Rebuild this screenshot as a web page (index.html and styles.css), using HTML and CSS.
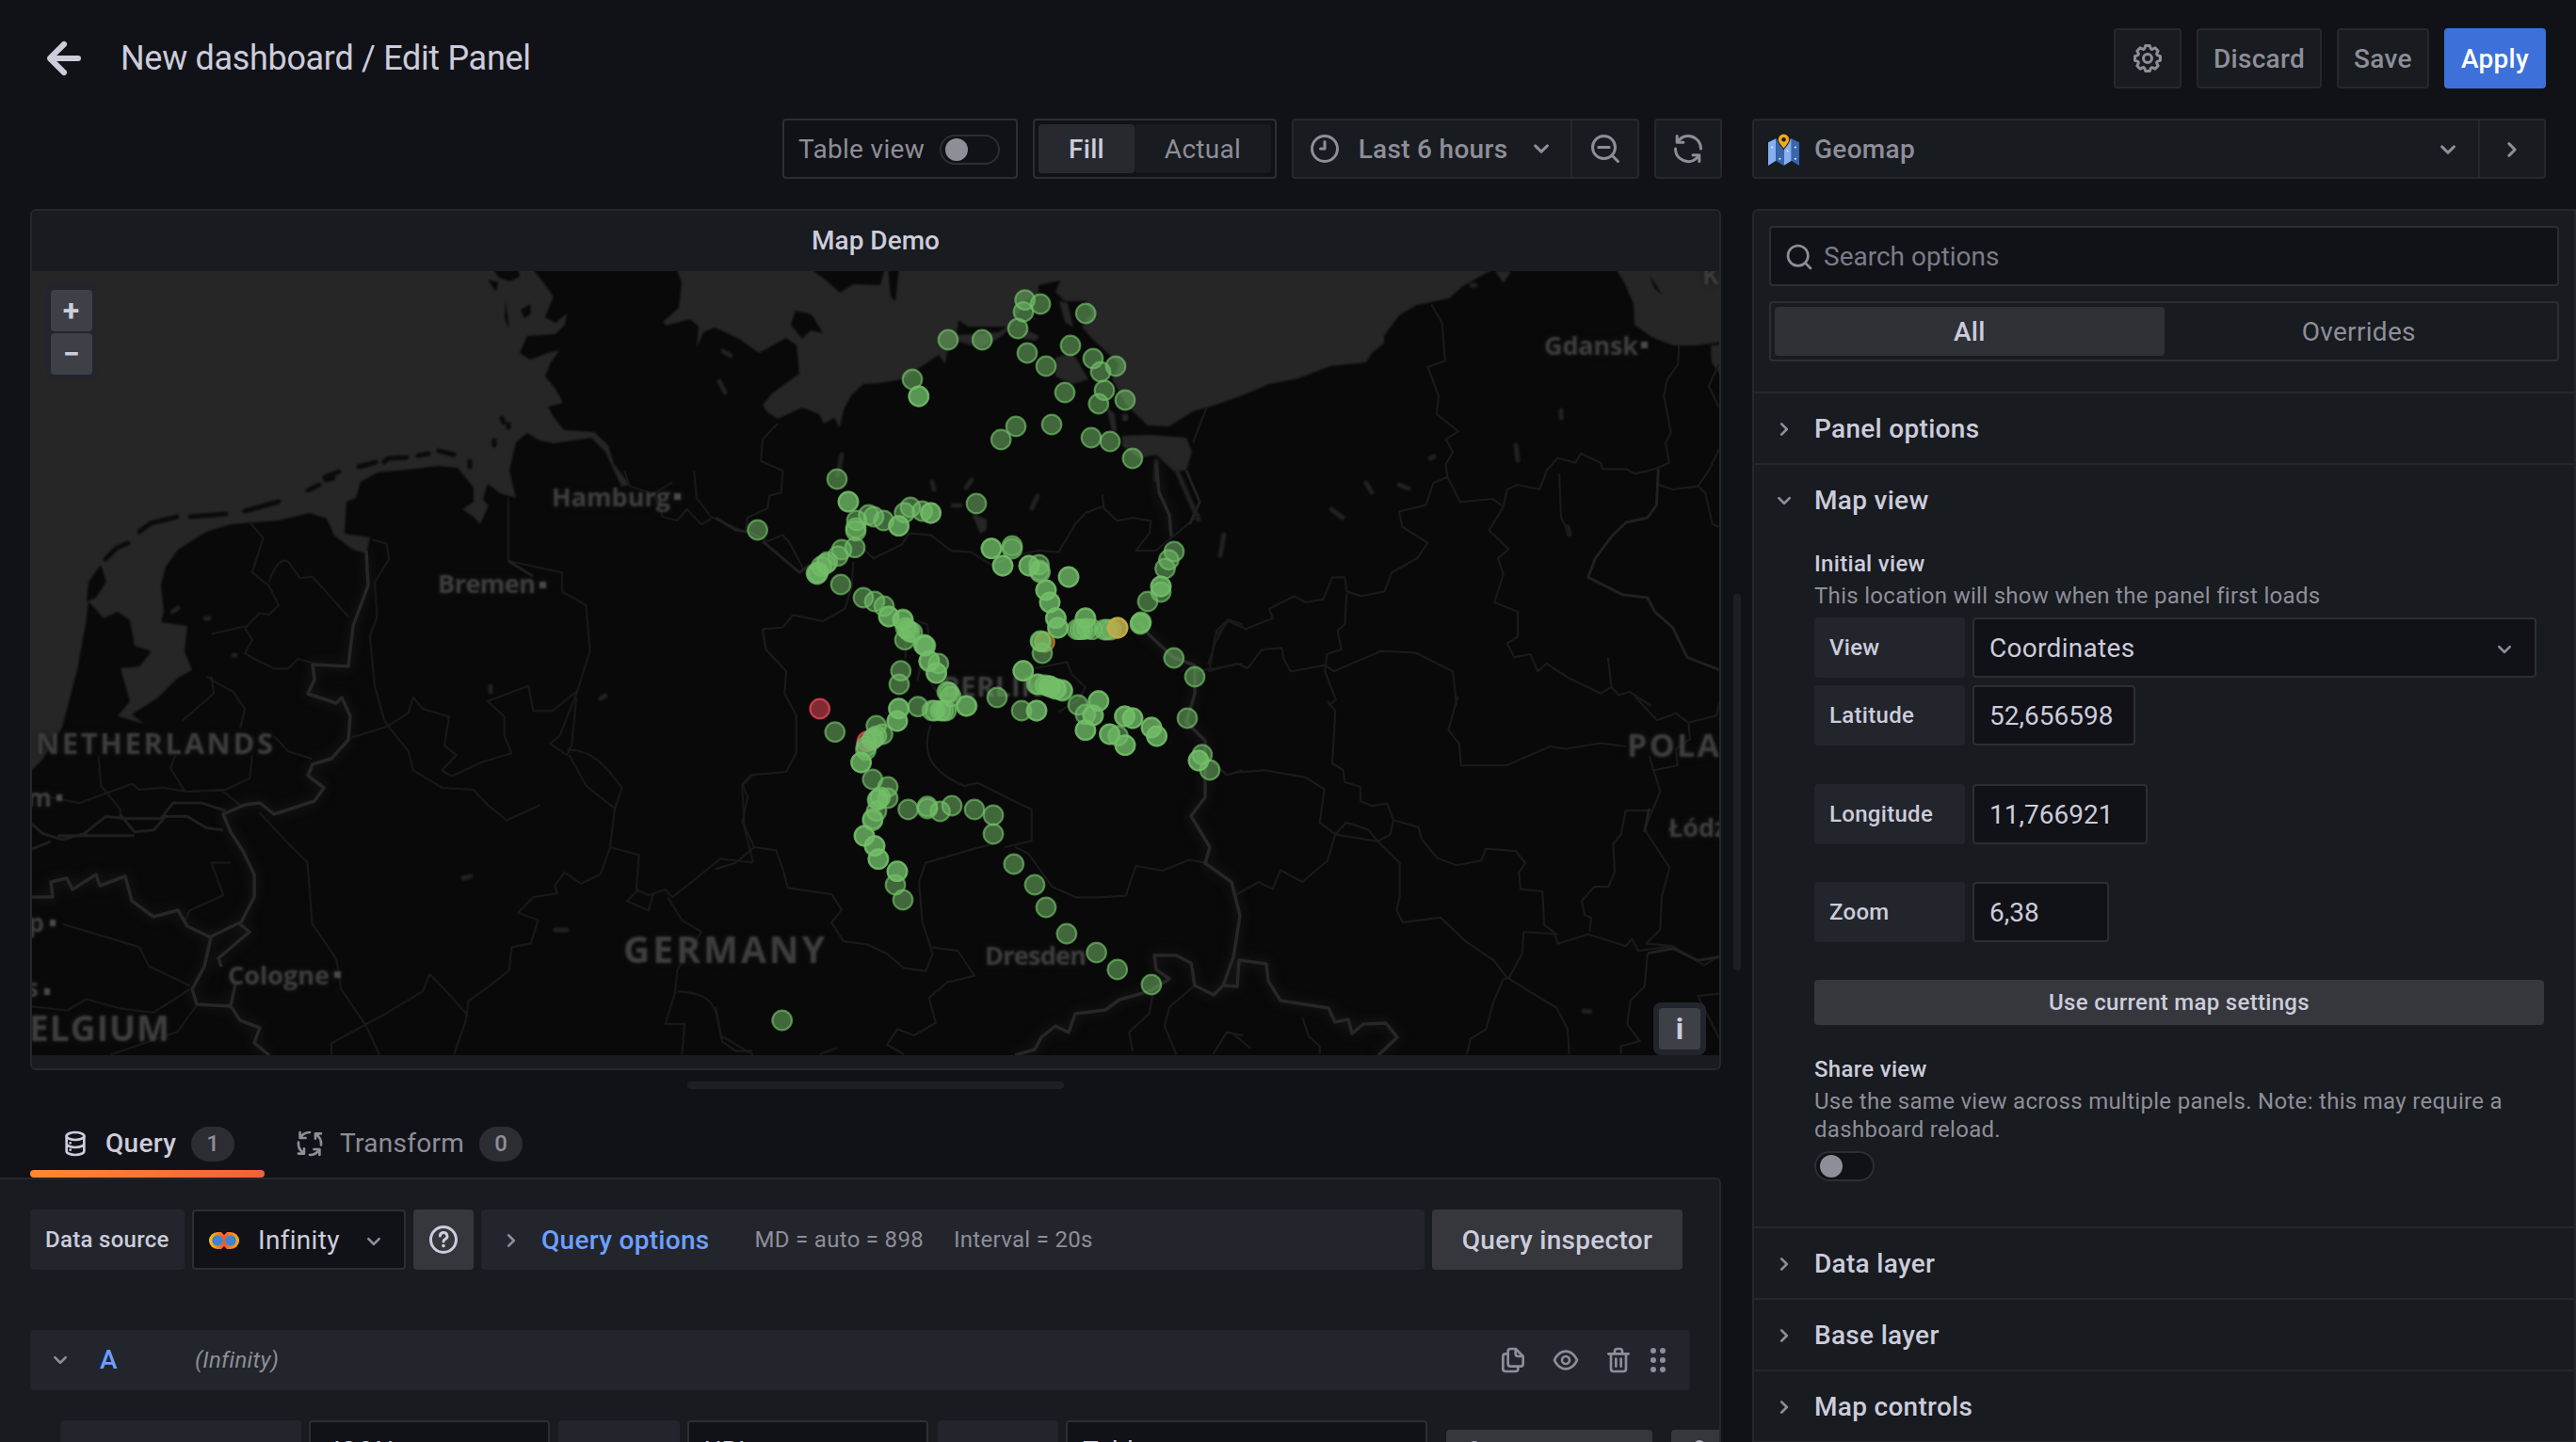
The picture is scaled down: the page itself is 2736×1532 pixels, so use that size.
FILE: index.html
```html
<!DOCTYPE html>
<html lang="en">
<head>
<meta charset="utf-8">
<title>New dashboard / Edit Panel</title>
<link rel="stylesheet" href="styles.css">
</head>
<body>
<svg class="defs" width="0" height="0">
  <symbol id="arrow-left" viewBox="0 0 24 24"><path d="M17,11H9.41l3.3-3.29a1,1,0,1,0-1.42-1.42l-5,5a1,1,0,0,0-.21.33,1,1,0,0,0,0,.76,1,1,0,0,0,.21.33l5,5a1,1,0,0,0,1.42,0,1,1,0,0,0,0-1.42L9.41,13H17a1,1,0,0,0,0-2Z"/></symbol>
  <symbol id="cog" viewBox="0 0 24 24"><path d="M21.32,9.55l-1.89-.63.89-1.78A1,1,0,0,0,20.13,6L18,3.87a1,1,0,0,0-1.15-.19l-1.78.89-.63-1.89A1,1,0,0,0,13.5,2h-3a1,1,0,0,0-.95.68L8.92,4.57,7.14,3.68A1,1,0,0,0,6,3.87L3.87,6a1,1,0,0,0-.19,1.15l.89,1.78-1.89.63A1,1,0,0,0,2,10.5v3a1,1,0,0,0,.68.95l1.89.63-.89,1.78A1,1,0,0,0,3.87,18L6,20.13a1,1,0,0,0,1.15.19l1.78-.89.63,1.89a1,1,0,0,0,.95.68h3a1,1,0,0,0,.95-.68l.63-1.89,1.78.89A1,1,0,0,0,18,20.13L20.13,18a1,1,0,0,0,.19-1.15l-.89-1.78,1.89-.63A1,1,0,0,0,22,13.5v-3A1,1,0,0,0,21.32,9.55ZM20,12.78l-1.2.4A2,2,0,0,0,17.64,16l.57,1.14-1.1,1.1L16,17.64a2,2,0,0,0-2.79,1.16l-.4,1.2H11.22l-.4-1.2A2,2,0,0,0,8,17.64l-1.14.57-1.1-1.1L6.36,16A2,2,0,0,0,5.2,13.18L4,12.78V11.22l1.2-.4A2,2,0,0,0,6.36,8L5.79,6.89l1.1-1.1L8,6.36A2,2,0,0,0,10.82,5.2l.4-1.2h1.56l.4,1.2A2,2,0,0,0,16,6.36l1.14-.57,1.1,1.1L17.64,8a2,2,0,0,0,1.16,2.79l1.2.4ZM12,8a4,4,0,1,0,4,4A4,4,0,0,0,12,8Zm0,6a2,2,0,1,1,2-2A2,2,0,0,1,12,14Z"/></symbol>
  <symbol id="angle-down" viewBox="0 0 24 24"><path d="M17,9.17a1,1,0,0,0-1.41,0L12,12.71,8.46,9.17a1,1,0,0,0-1.41,0,1,1,0,0,0,0,1.42l4.24,4.24a1,1,0,0,0,1.42,0L17,10.59A1,1,0,0,0,17,9.17Z"/></symbol>
  <symbol id="angle-right" viewBox="0 0 24 24"><path d="M14.83,11.29,10.59,7.05a1,1,0,0,0-1.42,0,1,1,0,0,0,0,1.41L12.71,12,9.17,15.54a1,1,0,0,0,0,1.41,1,1,0,0,0,.71.29,1,1,0,0,0,.71-.29l4.24-4.24A1,1,0,0,0,14.83,11.29Z"/></symbol>
  <symbol id="clock" viewBox="0 0 24 24"><g class="line"><circle cx="12" cy="12" r="9"/><path d="M12 7v5H9"/></g></symbol>
  <symbol id="search" viewBox="0 0 24 24"><g class="line"><circle cx="11" cy="11" r="8"/><path d="M17 17l4 4"/></g></symbol>
  <symbol id="search-minus" viewBox="0 0 24 24"><g class="line"><circle cx="11" cy="11" r="8"/><path d="M17 17l4 4M7.2 11h7.6"/></g></symbol>
  <symbol id="sync" viewBox="0 0 24 24"><path d="M19.91,15.51H15.38a1,1,0,0,0,0,2h2.4A8,8,0,0,1,4,12a1,1,0,0,0-2,0,10,10,0,0,0,16.88,7.23V21a1,1,0,0,0,2,0V16.5A1,1,0,0,0,19.91,15.51ZM12,2A10,10,0,0,0,5.12,4.77V3a1,1,0,0,0-2,0V7.5a1,1,0,0,0,1,1H8.62a1,1,0,0,0,0-2H6.22A8,8,0,0,1,20,12a1,1,0,0,0,2,0A10,10,0,0,0,12,2Z"/></symbol>
  <symbol id="database" viewBox="0 0 24 24"><g class="line"><ellipse cx="12" cy="6" rx="7" ry="3"/><path d="M5 6v12c0 1.7 3.1 3 7 3s7-1.300 7-3V6M5 12c0 1.700 3.100 3 7 3s7-1.300 7-3"/></g><circle cx="8" cy="11.500" r="1"/><circle cx="8" cy="17" r="1"/></symbol>
  <symbol id="process" viewBox="0 0 24 24"><g class="line"><path d="M4.200 3v4.500H8.700M4.600 7A9 9 0 0 1 12 3M21 4h-4.500v4M17 4.600A9 9 0 0 1 21 13M19.800 21v-4.500h-4.500M19.400 17A9 9 0 0 1 12 21M3 20h4.500v-4M7 19.400A9 9 0 0 1 3 11"/></g></symbol>
  <symbol id="question" viewBox="0 0 24 24"><g class="line"><circle cx="12" cy="12" r="9"/><path d="M9.600 9.400a2.500 2.500 0 1 1 3.600 2.300c-.8.4-1.200.8-1.200 1.600"/></g><circle cx="12" cy="16.400" r="1.200"/></symbol>
  <symbol id="copy" viewBox="0 0 24 24"><path d="M21,8.94a1.31,1.31,0,0,0-.06-.27l0-.09a1.070,1.070,0,0,0-.19-.28h0l-6-6h0a1.070,1.070,0,0,0-.28-.19.320.320,0,0,0-.09,0A.88.88,0,0,0,14.050,2H10A3,3,0,0,0,7,5V6H6A3,3,0,0,0,3,9V19a3,3,0,0,0,3,3h8a3,3,0,0,0,3-3V18h1a3,3,0,0,0,3-3V9S21,9,21,8.940ZM15,5.410,17.590,8H16a1,1,0,0,1-1-1ZM15,19a1,1,0,0,1-1,1H6a1,1,0,0,1-1-1V9A1,1,0,0,1,6,8H7v7a3,3,0,0,0,3,3h5Zm4-4a1,1,0,0,1-1,1H10a1,1,0,0,1-1-1V5a1,1,0,0,1,1-1h3V7a3,3,0,0,0,3,3h3Z"/></symbol>
  <symbol id="eye" viewBox="0 0 24 24"><path d="M21.920,11.600C19.900,6.910,16.100,4,12,4S4.100,6.910,2.080,11.600a1,1,0,0,0,0,.8C4.100,17.090,7.900,20,12,20s7.900-2.910,9.920-7.600A1,1,0,0,0,21.920,11.600ZM12,18c-3.170,0-6.170-2.290-7.900-6C5.830,8.290,8.830,6,12,6s6.170,2.290,7.900,6C18.170,15.710,15.170,18,12,18ZM12,8a4,4,0,1,0,4,4A4,4,0,0,0,12,8Zm0,6a2,2,0,1,1,2-2A2,2,0,0,1,12,14Z"/></symbol>
  <symbol id="trash" viewBox="0 0 24 24"><path d="M10,18a1,1,0,0,0,1-1V11a1,1,0,0,0-2,0v6A1,1,0,0,0,10,18ZM20,6H16V5a3,3,0,0,0-3-3H11A3,3,0,0,0,8,5V6H4A1,1,0,0,0,4,8H5V19a3,3,0,0,0,3,3h8a3,3,0,0,0,3-3V8h1a1,1,0,0,0,0-2ZM10,5a1,1,0,0,1,1-1h2a1,1,0,0,1,1,1V6H10Zm7,14a1,1,0,0,1-1,1H8a1,1,0,0,1-1-1V8H17Zm-3-1a1,1,0,0,0,1-1V11a1,1,0,0,0-2,0v6A1,1,0,0,0,14,18Z"/></symbol>
  <symbol id="grip" viewBox="0 0 20 28"><circle cx="5" cy="4" r="3"/><circle cx="15" cy="4" r="3"/><circle cx="5" cy="14" r="3"/><circle cx="15" cy="14" r="3"/><circle cx="5" cy="24" r="3"/><circle cx="15" cy="24" r="3"/></symbol>
</svg>

<header class="topbar">
  <svg class="icon back"><use href="#arrow-left"/></svg>
  <h1 class="page-title">New dashboard / Edit Panel</h1>
  <div class="actions">
    <button class="btn gear"><svg class="icon s36"><use href="#cog"/></svg></button>
    <button class="btn discard">Discard</button>
    <button class="btn save">Save</button>
    <button class="btn apply">Apply</button>
  </div>
</header>

<div class="toolbar">
  <div class="toolbar-left">
    <label class="table-view">Table view <span class="switch"></span></label>
    <div class="radio size-mode"><span class="radio-item active">Fill</span><span class="radio-item">Actual</span></div>
    <div class="btn-group">
      <button class="btn time"><svg class="icon s36"><use href="#clock"/></svg><span class="time-text">Last 6 hours</span><svg class="icon s36"><use href="#angle-down"/></svg></button>
      <button class="btn zoom-out"><svg class="icon s36"><use href="#search-minus"/></svg></button>
    </div>
    <button class="btn refresh"><svg class="icon s36"><use href="#sync"/></svg></button>
  </div>
  <div class="picker">
    <button class="btn picker-main">
      <svg class="map-logo" viewBox="0 0 32 33"><path fill="#84aff1" d="M0 9l8-4v23l-8 5zM16 9l8-4v23l-8 5z"/><path fill="#3865ab" d="M8 5l8 4v24l-8-5zM24 5l8 4v24l-8-5z"/><g fill="#e8f0ff"><circle cx="4" cy="14" r="1"/><circle cx="12" cy="26" r="1"/><circle cx="20" cy="18" r="1"/><circle cx="28" cy="14" r="1"/><circle cx="28" cy="26" r="1"/></g><path fill="#f2a81d" stroke="#181b1f" stroke-width="1" d="M16 16c-2-3-6-6-6-10a6 6 0 0 1 12 0c0 4-4 7-6 10z"/><circle cx="16" cy="6" r="2.200" fill="#181b1f"/></svg>
      <span>Geomap</span><svg class="icon s36 push"><use href="#angle-down"/></svg>
    </button>
    <button class="btn picker-toggle"><svg class="icon s36"><use href="#angle-right"/></svg></button>
  </div>
</div>

<main class="editor">
  <section class="left">
    <div class="panel">
      <h2 class="panel-title">Map Demo</h2>
      <div class="map">
        <svg class="map-canvas" viewBox="34 288 1792 833" preserveAspectRatio="none">
          <defs>
            <marker id="g" markerUnits="userSpaceOnUse" markerWidth="26" markerHeight="26" refX="13" refY="13"><circle cx="13" cy="13" r="10.300" class="dot green"/></marker>
          </defs>
          <rect class="land" x="34" y="288" width="1792" height="833"/>
          <g class="terrain">
            <!-- seas -->
            <path class="water" d="M30 284H564L574 296 588 315 579 337 590 343 602 333 600 345 590 355 560 357 552 375 563 382 582 375 594 372 585 385 579 400 590 413 598 428 582 432 588 443 599 457 631 459 646 473 652 493 669 515 660 517 643 480 628 465 588 471 573 468 560 460 548 470 541 500 548 529 531 524 518 514 513 531 519 537 510 557 503 549 491 541 503 533 503 518 486 497 465 495 442 498 401 502 383 512 378 529 368 533 366 567 393 571 389 588 375 584 355 569 347 551 329 545 296 553 245 557 219 565 189 584 176 602 171 622 174 651 171 661 199 665 196 692 204 712 189 720 168 741 140 759 153 769 125 761 138 745 128 710 148 708 161 692 143 686 138 659 125 650 110 657 94 639 91 663 82 712 66 773 46 806 30 822Z"/>
            <path class="water" d="M718 284L724 300 721 327 704 342 707 346 733 339 742 347 740 370 747 353 759 348 785 360 806 375 835 359 846 367 849 397 820 418 810 430 814 437 826 445 852 433 870 440 875 450 886 444 892 455 896 435 904 420 917 408 935 407 958 403 978 390 997 377 1004 387 1006 373 1019 363 1042 370 1064 357 1071 350 1081 333 1089 320 1103 313 1103 303 1126 298 1121 310 1131 320 1153 320 1160 333 1149 347 1160 360 1171 370 1189 387 1181 403 1196 430 1219 452 1242 453 1267 437 1292 430 1320 420 1348 408 1379 402 1413 389 1451 385 1457 375 1470 365 1470 357 1486 335 1505 324 1539 317 1555 303 1590 284Z"/>
            <path class="water" d="M1715 284L1725 300 1735 323 1736 345 1754 358 1777 367 1803 367 1830 363V284ZM1817 367L1830 366V402L1818 385ZM1192 463L1221 462 1260 465 1266 480 1260 500 1246 500 1228 483 1210 487 1192 474ZM1121 380L1139 374 1156 403 1139 408 1121 400ZM1125 320L1134 322 1140 348 1131 342ZM1032 545L1048 552 1048 563 1041 567ZM1175 432L1184 440 1186 458 1181 458ZM1192 440H1198V447H1192ZM1588 288H1605L1597 301ZM1089 350L1104 357 1100 362 1086 360Z"/>
            <!-- islands -->
            <path class="isle" d="M522 284H550L552 294 542 299 530 295ZM518 297L527 310 529 300ZM553 329L563 323 564 333 557 338ZM537 320L541 350 536 338ZM845 330L862 334 874 354 861 351 852 360 840 345ZM858 284L878 298 892 311 906 302 935 303 940 284ZM943 284L955 284 951 320 946 315ZM107 600L113 618 102 635 92 639 94 618ZM1018 340L1028 347 1070 347 1060 353 1016 356ZM1752 292L1766 314 1757 306Z"/>
            <path class="isle-line" d="M112 594L124 582 136 577M148 565L160 556 188 549M202 549L240 546M260 543L296 533M327 521L339 515M346 510l8-2M345 507L360 501M381 496L399 491M408 491L412 487 432 486M444 484L455 482M466 479L482 483M499 490v6M525 468v5M533 444l2 5M540 451v3"/>
            <!-- lakes -->
            <path class="lake" d="M768 373l8 5M764 405l6 12M894 483l-4 22M1032 510l-6 8M1102 527l-6 13M1451 513l6 10M1486 515l10 4M1519 487l4-2M1414 541l12 9M1300 568l-4 22M1610 473l2 16M1658 436v8M1665 560l2 8M990 512l2 8M1012 537h8M638 742l5-3M521 729v6M492 933l8-2M590 988l12 0M218 657l4 0M183 650l6-4M248 696h2M1250 500l14 32 9 20M1563 303h4M1228 490v20M1682 1074l7 1"/>
          </g>
          <g class="states">
            <g transform="translate(0 500) scale(.5102 .4082)">
              <path d="M520 135L548 175 525 265 560 300 580 350 560 375 540 370 510 410 525 440 510 475 530 490 570 515 600 515 620 490 650 500M560 290C570 250 590 215 605 245L625 280 650 275 725 380M440 425L475 415 510 405M430 535L455 555 485 575 510 620 500 670M440 535L445 580 380 650M775 180L805 190 810 230 780 290 785 380 770 430 780 560 800 650 808 665 730 695M808 665L850 630 860 590 880 620 935 640 925 715 950 740 920 780 940 795 1000 760 1065 735 1050 690 1050 640 1015 600 1100 560 1110 625 1150 625 1200 575M808 665L850 730 860 780 920 825 985 830 1015 870 1055 910 1125 870M1058 70V235L1170 265V315L1220 350 1228 470 1200 580 1165 690 1145 710 1180 740 1190 715 1200 590M1180 725C1240 730 1260 770 1295 825L1280 880 1220 820 1185 740M1280 880L1270 980 1330 1000 1325 1090 1350 1105 1385 1090 1400 1110 1500 1010 1568 1020M1270 980L1250 1050 1210 1075 1175 1045 1155 1080 1160 1100 1110 1110 1078 1150 1120 1170 1105 1230 1065 1240 1060 1300 1020 1340 975 1380 970 1430 945 1520M975 1420L940 1370 895 1310 880 1355 800 1415 690 1490 690 1520M1330 1090L1305 1120 1350 1145 1360 1100M1390 1110L1420 1170 1460 1200 1410 1300 1405 1360 1385 1440 1425 1440 1420 1520M1410 1355C1490 1360 1490 1400 1500 1470L1568 1520M1300 0L1310 40 1360 60 1400 30M1445 0L1450 70 1480 120 1550 160M1360 60L1380 120 1410 130 1430 100 1460 140 1480 125M205 740L210 820 250 880 250 900M365 740L355 775 385 835M525 740L520 800 470 830 390 835 340 825 290 830 275 815 220 840 165 865 66 840M570 690L600 730 650 750M460 830L500 870M540 890L600 970 640 1020 650 1180 700 1270 710 1350 760 1440 790 1520M480 1020H440L465 1105 395 1145 385 1170M66 1395L140 1405 180 1375 250 1400 320 1410 395 1350M395 1340L310 1290 290 1240 130 1180M410 1390L370 1460 230 1520M1568 790L1545 820 1550 930 1568 1020"/>
              <path class="river" d="M66 920L90 945 130 960 175 945 220 900 260 905 335 905 360 865 420 865 470 885M250 895L280 940 320 935 345 900 390 900 430 930 465 935M120 950H280M66 985L105 965M1058 235L1110 275"/>
            </g>
            <g transform="translate(760 270) scale(.35714 .33333)">
              <path d="M185 540L140 590 135 660 200 690 195 760 160 770 155 810 95 840 90 880 155 915 200 895 220 920 265 1010M410 980L405 1060 385 1130 320 1170 230 1150 200 1190 140 1195 150 1260 180 1295M430 930L470 970 555 925 575 890 640 895 700 945 760 950 820 990 880 965 960 945 1020 950 1070 860 1100 825 1150 805 1195 850 1240 840 1295 850 1290 890 1250 945 1310 945 1360 900 1440 830M1150 765L1155 810M1460 490L1420 600M565 1240V1290M600 1170L630 1180 635 1230M1475 1290L1490 1200 1525 1165 1568 1180"/>
              <path class="river" d="M0 840L60 880 95 885M140 915L250 1015 280 990M1400 690L1440 790 1410 860"/>
            </g>
            <g transform="translate(760 640) scale(.35714 .33333)">
              <path d="M140 90L150 150 210 220 205 290 240 360 240 480 210 540 105 550 80 580 95 620 80 700 115 780 180 790 200 850 215 910 345 930 375 980 345 1020 380 1080 450 1090 510 1120 560 1165 625 1175 645 1120 640 1100 615 1020 605 890 625 830 770 785 825 770M115 780L60 830 0 850M645 1100L720 1110 770 1190 690 1210 635 1260 655 1340 590 1380 540 1360 510 1410 560 1440M640 390C610 480 640 540 740 585L780 575 900 640 940 660 940 760 860 780M890 780L930 800 1000 905 1070 940 1140 940 1220 935 1250 840 1330 855 1410 820 1455 830M600 250L610 200 660 290M950 210L1045 190 1060 230 1100 270 1080 310 1020 350M1470 210L1485 110 1525 60 1568 80M1430 220L1568 195M1470 500L1520 550 1568 535M1300 1250L1290 1310 1230 1370 1240 1430M1425 1220L1350 1290 1335 1350 1370 1440M1568 1380L1520 1370 1480 1440M0 1290L20 1400 60 1430 110 1430M310 1440L360 1420"/>
            </g>
            <g transform="translate(1260 270) scale(.3827 .33333)">
              <path d="M680 160L710 220 718 340 670 360 700 450 695 510 755 565 720 590 740 630 720 670 725 710 760 790 850 780 880 805 890 750 920 735 980 750 1000 690 1030 650 1080 665 1095 635 1150 665 1155 685 1220 685 1245 700 1300 685 1340 665 1330 600 1345 570 1325 450 1335 400 1365 350 1367 290M725 710L685 730 665 800 590 820 600 870 670 920 640 970 570 1015 550 1075 485 1090 445 1075 440 1030 405 1030 380 1100 330 1110 300 1090 230 1130 240 1160 165 1195 115 1165 80 1240 60 1310M60 1330L140 1305 170 1320 210 1260 265 1255 270 1290 290 1330 385 1310 410 1330 540 1265 635 1270 740 1330 750 1440M445 1080L440 1180 420 1200 430 1260 390 1275 385 1330 415 1420 395 1440M880 805L840 880 895 940 865 970 880 1020 855 1110 920 1140 920 1220 890 1240 910 1285 955 1275 975 1330 1000 1305 1060 1350 1150 1400 1180 1380 1170 1285M1180 1380L1200 1405 1230 1395 1290 1440M1310 735L1350 750 1420 740 1440 760 1460 860 1479 870M1420 740L1450 690 1479 620M1479 350L1450 420 1479 490M1035 700L1040 840 1065 895"/>
              <path class="river" d="M1310 685L1305 800 1280 840 1220 855 1180 900 1135 970 1115 1030 1210 1085 1280 1095 1300 1140 1350 1190 1390 1285 1479 1325"/>
            </g>
            <g transform="translate(1310 740) scale(.33333 .50505)">
              <path d="M300 10L325 30 315 140 350 155 355 180 405 190 405 220 440 230 490 225 510 260 590 275 600 300 650 340 710 355 790 345 805 320 900 325 930 350 910 370 915 405 985 410 990 480 1020 495 1035 520 1130 500 1250 525 1270 510 1290 535 1400 525 1500 565 1549 545M0 160L100 155 230 170 290 195 275 265 325 290 460 305 530 350 530 420 520 450 540 475 660 465 740 515 830 555 870 590 930 615 1030 655 1065 700 1070 752M0 420L80 390 125 405 150 365 220 390 300 345 325 290 360 265 430 280 460 305 500 290 510 260M715 0L685 70 720 100 725 145 870 145 1010 105 1060 110 1170 98 1250 105M1280 0L1350 50 1410 35 1450 55 1540 40 1549 10M1450 55L1455 90 1410 110 1415 145 1340 155M1325 125L1360 200 1310 280 1390 360 1365 420 1360 490 1315 520 1400 525M1330 240L1250 240 1235 290 1210 310 1215 370 1195 400 1150 400 1110 430 1120 460 1140 465 1135 495M1035 500L925 495 920 540 880 590 860 595 830 640 805 700 755 720 745 752M1320 540L1310 610 1265 640 1255 690 1295 725 1235 735V752M0 710L55 740M220 675L240 715 275 735V752M1549 625L1480 630 1549 720"/>
              <path class="river" d="M1325 235L1310 285M1320 540L1400 530 1480 555 1549 548"/>
            </g>
          </g>
          <g class="borders">
            <path d="M389 585L391 622 375 665 370 708 332 706 334 722 327 737 357 747 363 741 372 761 370 786 352 806 332 812 327 824 344 837 334 851 291 865 276 853 260 855 237 865 245 884 258 904 270 929 270 953 255 982 265 990 232 1018 235 1027M34 953L56 953 54 937 71 933 77 945 102 929 106 941 133 931 140 957 163 974 189 967 199 984 224 996 217 1027 204 1051 209 1067 245 1069 255 1084 276 1092 270 1108 286 1121M245 1069L250 1045M222 996L255 980"/>
            <path d="M1228 493L1231 523 1242 547 1244 570M1211 662L1221 675 1246 698 1269 707V737L1260 767 1280 787V847L1265 867 1285 900 1280 917 1308 937 1317 973 1310 1017 1299 1047 1289 1057 1269 1047 1265 1023 1249 1015 1226 1015 1228 1030 1242 1040 1221 1053 1189 1062 1174 1073 1142 1077 1135 1097 1121 1090 1106 1102 1099 1115 1078 1121M1299 1047L1314 1048 1316 1020 1345 1024 1347 1042 1360 1063 1411 1071 1418 1086 1432 1083 1436 1098 1448 1088 1472 1087 1484 1102 1464 1121"/>
          </g>
          <g class="labels">
            <g font-size="27">
              <text x="586" y="538" textLength="126">Hamburg</text><text x="465" y="630" textLength="104">Bremen</text><text x="242" y="1046" textLength="108">Cologne</text><text x="1046" y="1025" textLength="108">Dresden</text><text x="1640" y="377" textLength="100">Gdansk</text><text x="1808" y="302">K</text><text x="1772" y="889">Łódź</text><text x="55" y="857" text-anchor="end">m</text><text x="47" y="990" text-anchor="end">p</text><text x="41" y="1059" text-anchor="end">s</text>
            </g>
            <text x="38" y="801" font-size="31" textLength="252">NETHERLANDS</text>
            <text x="662" y="1023" font-size="39" textLength="214">GERMANY</text>
            <text x="1000" y="740" font-size="29" textLength="108">BERLIN</text>
            <text x="31" y="1106" font-size="37" textLength="149">ELGIUM</text>
            <text x="1728" y="804" font-size="34" textLength="98">POLA</text>
            <path class="town" d="M716 524h7v7h-7zM573 618h7v7h-7zM355 1032h7v7h-7zM1743 363h7v7h-7zM60 844h6v7h-6zM53 977h6v7h-6zM47 1050h6v7h-6z"/>
          </g>
          <g class="dot red"><circle cx="870.700" cy="753" r="10.300"/><circle cx="921" cy="787.700" r="10.300"/></g>
          <circle class="dot orange" cx="1109.500" cy="682" r="10.300"/>
          <polyline class="pts" points="1088.6,318.7 1105,323 1087,331.3 1153.2,333 1081,349 1007,361 1043.2,361 1091,375 1137,367 1111,389 1161,381 1185,389 1169,395 1173,414.7 1166.8,429 1195,425 1131,417 969,403 975.8,421 975.8,421 1079,453 1063.2,467 1117,451 1159,465 1179,469 1202.9,487 889,509 901,533 901,533 804.6,563 1037,535 910,553 909,561 909,564 922.5,547 928,549 938.6,553 954.6,558.7 954.6,558.7 960.7,544.7 967,539 979.6,543 988.6,545 988.6,545 908,581.7 894,584 890,590.7 879,597 877,599 872.5,601.7 869,608 867,609 868,610 893,621"/>
          <polyline class="pts" points="917,635 929,639 939,644 944,655 944,655 959,658 959,659 962,667 964,669 966,671 969,672 961,679.7 981,685 983,686 982,686 986.8,702.7 987,702 996.8,705 994.6,715 994.6,715 956.8,712.7 955,727 1006,735 1008,736 1010,740 1026,750 1027,750 954.6,752.7 954.6,753 953,766 953,766 975,750.7 990,755 993,755 999,755 1002,755 1005,755 886.8,777.7 930.7,771 937.5,780 928,784 926,786 931,782 919.6,796.7 920,793 914.6,810 914.6,810 926.8,828 943,836 943,848 933,849 932,850 935,847 931,861.7 926.8,871.7 927,870 918,888 918,888 929,898.7 929,898.7 932.9,912.7 932.9,912.7 953,925.7 953,925.7 951,940 959,956 964.6,860 985,856.7 985,859 998.6,862 1011,856 1035,860 1055,866 1055,886 1076.8,918 1099,940 1111,964 1132.9,992 1164.6,1012 1186.8,1030 1222.9,1046 830.7,1084"/>
          <polyline class="pts" points="1053,582.7 1053,582.7 1075,580 1075,583 1065,601 1065,601 1093,601 1093,601 1103.6,600 1104.6,608 1104,606 1135,613 1135,613 1111,627 1111,627 1115,640 1115,640 1121.4,656.7 1121.4,656.7 1123.6,667 1123.6,667 1152.9,656.7 1152.9,657 1144,668.7 1147,668.7 1150,668.7 1154.6,668 1160,668.7 1173,669 1176,669 1180,669 1187,667 1187,667 1211.4,662 1212,661 1211,663 1219,639 1233,629 1233,623 1233,623 1237.5,604 1241.4,594.7 1247,586 1105.7,681.7 1105,681 1107,694 1246.8,699 1086.8,712.7 1086.8,712.7 1101,727 1103,727 1110,728 1115,729 1114,729 1116,730 1120.7,731.7 1122,732 1128.6,734 1128,733 1059,741 1085,755 1101,755 1101,755 1145,749 1166.8,744.7 1166.8,744.7 1152.9,759 1161,760 1161,760 1152.9,775.7 1152.9,775.7 1178.6,780 1178.6,780 1187.5,781.7 1195,791.7 1195,791.7 1194.6,761 1194.6,761 1203,763 1203,763 1223,773 1223,773 1228.6,782 1228.6,782 1269,719 1261,763 1276.8,801.7 1273,808 1273,808 1285,818"/>
          <circle class="dot orange" cx="1187" cy="667" r="10.300"/>
        </svg>
        <div class="zoom-control"><button>+</button><button>−</button></div>
        <div class="info-control"><button>i</button></div>
      </div>
    </div>
    <div class="h-handle"></div>
    <nav class="tabs">
      <a class="tab active"><svg class="icon s32"><use href="#database"/></svg>Query<span class="badge">1</span></a>
      <a class="tab"><svg class="icon s32"><use href="#process"/></svg>Transform<span class="badge">0</span></a>
    </nav>
    <div class="query-pane">
      <div class="row source-row">
        <span class="field-label">Data source</span>
        <div class="select source-select">
          <svg class="infinity" viewBox="0 0 32 18"><defs><linearGradient id="ig" x1="0" x2="1"><stop offset="0" stop-color="#fbca0a"/><stop offset=".5" stop-color="#f4552e"/><stop offset="1" stop-color="#fbb40a"/></linearGradient></defs><rect width="32" height="18" rx="9" fill="url(#ig)"/><path fill="#111217" d="M13 0h6l-3 3zM13 18h6l-3-3z"/><circle cx="9" cy="9" r="5.800" fill="#3d83d6"/><circle cx="23" cy="9" r="5.800" fill="#3d83d6"/></svg>
          <span>Infinity</span><svg class="icon s32 push"><use href="#angle-down"/></svg>
        </div>
        <button class="solid help"><svg class="icon s36"><use href="#question"/></svg></button>
        <div class="query-options"><svg class="icon s32"><use href="#angle-right"/></svg><span class="link">Query options</span><span class="meta">MD = auto = 898</span><span class="meta">Interval = 20s</span></div>
        <button class="solid inspector">Query inspector</button>
      </div>
      <div class="query-row">
        <svg class="icon s32"><use href="#angle-down"/></svg><span class="ref">A</span><em class="ds">(Infinity)</em>
        <div class="row-actions"><svg class="icon s32"><use href="#copy"/></svg><svg class="icon s32"><use href="#eye"/></svg><svg class="icon s32"><use href="#trash"/></svg><svg class="icon grip"><use href="#grip"/></svg></div>
      </div>
      <div class="row fields-row">
        <span class="field-label w256"></span><div class="select w256">JSON</div>
        <span class="field-label w129"></span><div class="select w256">URL</div>
        <span class="field-label w128"></span><div class="select w384">Table</div>
        <button class="solid add"><span class="round"></span></button><button class="solid more"><span class="round"></span></button>
      </div>
    </div>
  </section>
  <div class="gutter"><div class="v-handle"></div></div>
  <aside class="options">
    <div class="options-head">
      <div class="search"><svg class="icon s32"><use href="#search"/></svg>Search options</div>
      <div class="radio filter"><span class="radio-item active">All</span><span class="radio-item">Overrides</span></div>
    </div>
    <div class="section"><h3><svg class="icon s32"><use href="#angle-right"/></svg>Panel options</h3></div>
    <div class="section">
      <h3><svg class="icon s32"><use href="#angle-down"/></svg>Map view</h3>
      <div class="section-body">
        <h4>Initial view</h4>
        <p>This location will show when the panel first loads</p>
        <div class="row pair"><span class="field-label">View</span><div class="select view">Coordinates<svg class="icon s32 push"><use href="#angle-down"/></svg></div></div>
        <div class="row pair lat"><span class="field-label">Latitude</span><div class="select number w173">52,656598</div></div>
        <div class="row pair lon"><span class="field-label">Longitude</span><div class="select number w186">11,766921</div></div>
        <div class="row pair zoom"><span class="field-label">Zoom</span><div class="select number w145">6,38</div></div>
        <button class="solid use-current">Use current map settings</button>
        <h4>Share view</h4>
        <p>Use the same view across multiple panels. Note: this may require a dashboard reload.</p>
        <span class="switch"></span>
      </div>
    </div>
    <div class="section"><h3><svg class="icon s32"><use href="#angle-right"/></svg>Data layer</h3></div>
    <div class="section"><h3><svg class="icon s32"><use href="#angle-right"/></svg>Base layer</h3></div>
    <div class="section"><h3><svg class="icon s32"><use href="#angle-right"/></svg>Map controls</h3></div>
    <div class="section"></div>
  </aside>
</main>
</body>
</html>
```
FILE: styles.css
```css
:root {
  --canvas: #111217;
  --primary: #181b1f;
  --secondary: #22252b;
  --text: #ccccdc;
  --muted: #8e8e99;
  --weak: #25272c;
  --medium: #2d2e34;
  --solid: #35373c;
  --link: #6e9fff;
}
* { box-sizing: border-box; }
body {
  margin: 0;
  width: 2736px;
  height: 1532px;
  overflow: hidden;
  display: flex;
  flex-direction: column;
  background: var(--canvas);
  color: var(--text);
  font: 400 28px/1.5 Roboto, "Liberation Sans", sans-serif;
  letter-spacing: 0.3px;
}
h1, h2, h3, h4, p { margin: 0; font-weight: 500; }
button { font: inherit; letter-spacing: inherit; color: inherit; border: 0; padding: 0; margin: 0; }
.defs { display: block; height: 0; }
.icon { fill: currentColor; flex: none; display: block; }
.line { fill: none; stroke: currentColor; stroke-width: 2; stroke-linecap: round; stroke-linejoin: round; }
.s32 { width: 32px; height: 32px; }
.s36 { width: 36px; height: 36px; }
.push { margin-left: auto; }

/* top bar */
.topbar { height: 124px; flex: none; display: flex; align-items: center; padding: 0 32px; }
.back { width: 72px; height: 72px; }
.page-title { margin-left: 24px; font-size: 36px; font-weight: 400; line-height: 44px; letter-spacing: -0.32px; }
.actions { margin-left: auto; display: flex; gap: 16px; }
.btn {
  height: 64px;
  display: flex;
  align-items: center;
  justify-content: center;
  background: var(--primary);
  border: 2px solid var(--weak);
  border-radius: 4px;
  color: var(--muted);
  font-weight: 500;
}
.gear { width: 72px; }
.discard { width: 133px; padding-top: 1px; }
.save { width: 98px; padding-top: 1px; }
.apply { width: 108px; padding-top: 1px; background: #3d71d9; border-color: #3d71d9; color: #fff; }

/* toolbar */
.toolbar { display: flex; height: 64px; flex: none; margin: 2px 32px 32px 0; }
.toolbar-left { width: 1829px; display: flex; justify-content: flex-end; gap: 16px; }
.table-view {
  width: 250px;
  border: 2px solid var(--medium);
  border-radius: 4px;
  display: flex;
  align-items: center;
  justify-content: space-between;
  padding: 1px 17px 0 15px;
  color: var(--muted);
}
.switch {
  display: block;
  flex: none;
  width: 64px;
  height: 32px;
  border-radius: 16px;
  border: 2px solid var(--medium);
  background: var(--canvas);
  padding: 2px 4px;
}
.switch::before { content: ""; display: block; width: 24px; height: 24px; border-radius: 50%; background: #8e8e99; }
.radio { display: flex; height: 64px; border: 2px solid var(--medium); border-radius: 4px; padding: 4px; }
.radio-item { flex: 1; display: flex; align-items: center; justify-content: center; padding-top: 1px; color: var(--muted); border-radius: 4px; }
.radio-item.active { color: var(--text); font-weight: 500; background: #28292e; }
.size-mode { width: 259px; }
.size-mode .radio-item { background: var(--primary); }
.size-mode .active { flex: none; width: 102px; background: #28292e; }
.btn-group { display: flex; }
.time { width: 298px; border-radius: 4px 0 0 4px; padding: 0 13px 0 15px; justify-content: space-between; }
.time-text { padding-top: 1px; }
.zoom-out { width: 73px; margin-left: -2px; border-radius: 0 4px 4px 0; }
.refresh { width: 72px; }
.picker { margin-left: 32px; flex: 1; display: flex; }
.picker-main { flex: 1; border-radius: 4px 0 0 4px; justify-content: flex-start; padding: 1px 14px 0 15px; }
.map-logo { width: 33px; height: 34px; margin-right: 16px; overflow: visible; }
.picker-toggle { width: 72px; margin-left: -2px; border-radius: 0 4px 4px 0; padding-top: 1px; }

/* editor */
.editor { flex: 1; min-height: 0; display: flex; }
.left { width: 1828px; flex: none; display: flex; flex-direction: column; }
.panel {
  margin-left: 32px;
  height: 915px;
  flex: none;
  background: var(--primary);
  border: 2px solid var(--weak);
  border-radius: 6px;
}
.panel-title { height: 64px; font-size: 28px; line-height: 63px; text-align: center; letter-spacing: 0; }
.map { position: relative; height: 833px; overflow: hidden; }
.map-canvas { display: block; width: 1792px; height: 833px; }
.land, .isle { fill: #090909; }
.water { fill: #262626; }
.isle-line { fill: none; stroke: #0b0b0b; stroke-width: 5; stroke-linejoin: round; stroke-linecap: round; }
.lake { fill: none; stroke: #222; stroke-width: 5; stroke-linecap: round; }
.terrain { filter: blur(0.8px); }
.states { filter: blur(0.7px); }
.states path { fill: none; stroke: #1a1a1a; stroke-width: 2.2; stroke-linejoin: round; vector-effect: non-scaling-stroke; }
.states .river { stroke: #202020; stroke-width: 3; }
.borders { fill: none; stroke: #272727; stroke-width: 3.5; stroke-linejoin: round; filter: drop-shadow(0 0 6px #222) blur(0.7px); }
.labels { fill: #3d3d3d; font-family: "Open Sans", "Noto Sans", sans-serif; font-weight: 700; letter-spacing: 0; filter: drop-shadow(0 0 3px #151515) blur(0.8px); }
.town { fill: #4a4a4a; }
.dot { stroke-width: 2.2; }
.green { fill: rgb(115 191 105 / .52); stroke: rgb(115 191 105 / .68); }
.red { fill: rgb(242 73 92 / .52); stroke: rgb(242 73 92 / .75); }
.orange { fill: rgb(240 160 60 / .5); stroke: rgb(240 160 50 / .6); }
.pts { fill: none; stroke: none; marker: url(#g); }
.zoom-control, .info-control { position: absolute; background: #22252b; border-radius: 8px; display: grid; gap: 2px; }
.zoom-control { left: 15px; top: 15px; padding: 5px; }
.info-control { right: 14px; bottom: 0; padding: 6px; }
.zoom-control button, .info-control button {
  width: 44px;
  height: 44px;
  background: #3e4047;
  border-radius: 4px;
  font-size: 32px;
  line-height: 44px;
  font-weight: 700;
  letter-spacing: 0;
}
.zoom-control button { line-height: 43px; padding-right: 1px; }
.h-handle { width: 400px; height: 8px; flex: none; border-radius: 4px; background: #1e1f24; margin: 12px 0 0 730px; }

.tabs { height: 94px; flex: none; display: flex; align-items: stretch; padding-left: 32px; }
.tab { display: flex; align-items: center; color: var(--muted); padding: 23px 32px 1px; position: relative; }
.tab .icon { margin-right: 16px; }
.tab.active { color: var(--text); font-weight: 500; width: 249px; }
.tab.active::after { content: ""; position: absolute; left: 0; right: 0; bottom: 0; height: 8px; border-radius: 4px; background: linear-gradient(90deg, #ff8833, #f55f3e); }
.badge { margin-left: 16px; width: 46px; height: 37px; border-radius: 19px; background: #2c2d32; color: var(--muted); font-size: 24px; line-height: 37px; font-weight: 500; text-align: center; }

.query-pane {
  flex: 1;
  min-height: 0;
  overflow: hidden;
  background: var(--primary);
  border: 2px solid var(--weak);
  border-width: 2px 2px 0 0;
  border-radius: 0 6px 0 0;
  padding: 32px 0 0 32px;
}
.row { display: flex; gap: 8px; }
.field-label { height: 64px; flex: none; background: var(--secondary); border-radius: 4px; padding: 0 16px; font-size: 24px; font-weight: 500; line-height: 64px; white-space: nowrap; }
.select { height: 64px; flex: none; background: var(--canvas); border: 2px solid var(--medium); border-radius: 4px; padding: 1px 16px 0; display: flex; align-items: center; }
.select .icon { color: var(--muted); position: relative; top: 1px; }
.source-row .field-label { width: 164px; }
.source-select { width: 227px; }
.infinity { width: 32px; height: 18px; margin: 1px 20px 0 0; }
.solid { background: var(--solid); color: var(--text); border-radius: 4px; font-weight: 500; display: flex; align-items: center; justify-content: center; flex: none; }
.help { width: 64px; height: 64px; }
.query-options { width: 1002px; flex: none; background: var(--secondary); border-radius: 4px; display: flex; align-items: center; padding: 1px 0 0 16px; color: var(--muted); }
.link { color: var(--link); font-weight: 500; margin-left: 16px; margin-right: 17px; }
.meta { font-size: 24px; line-height: 34px; padding-bottom: 1px; margin-left: 31px; }
.meta + .meta { margin-left: 32px; }
.inspector { width: 266px; padding-top: 1px; }
.query-row { width: 1763px; height: 64px; margin-top: 64px; background: var(--secondary); border-radius: 4px; display: flex; align-items: center; padding: 0 24px 0 16px; color: var(--muted); }
.ref { color: var(--link); font-weight: 500; margin-left: 26px; width: 101px; }
.ds { font-size: 24px; }
.row-actions { margin-left: auto; display: flex; align-items: center; gap: 24px; }
.row-actions .grip { width: 20px; height: 28px; margin-left: -8px; }
.fields-row { margin: 32px 0 0 32px; }
.w256 { width: 256px; }
.w129 { width: 129px; margin-left: 1px; }
.w128 { width: 128px; margin-left: 2px; }
.w384 { width: 384px; }
.add, .more { height: 48px; margin-top: 10px; margin-left: 12px; align-items: flex-start; justify-content: flex-start; padding: 12px 0 0 24px; }
.add { width: 219px; }
.more { width: 64px; padding-top: 11px; }
.round { width: 12px; height: 12px; border: 3px solid #aaaab8; border-radius: 50%; }

/* gutter */
.gutter { width: 33px; flex: none; padding: 409px 0 0 13px; }
.v-handle { width: 8px; height: 400px; border-radius: 4px; background: #1e1f24; }

/* options pane */
.options { flex: 1; background: var(--primary); border: 2px solid var(--weak); border-bottom: 0; border-radius: 6px 0 0 0; }
.options-head { height: 192px; padding: 16px; }
.search { height: 64px; width: 839px; border: 2px solid var(--medium); border-radius: 4px; background: var(--canvas); display: flex; align-items: center; gap: 10px; padding: 1px 0 0 14px; color: #7b7c88; letter-spacing: 0; }
.search .icon { color: var(--muted); }
.filter { margin-top: 16px; width: 839px; }
.filter .active { background: #2e3136; }
.section { border-top: 2px solid var(--weak); }
.section h3 { height: 74px; display: flex; align-items: center; padding: 1px 0 0 16px; gap: 16px; font-size: 28px; }
.section h3 .icon { color: var(--muted); }
.section-body { padding: 13px 0 0 64px; height: 735px; }
.section-body h4 { font-size: 24px; line-height: 36px; }
.section-body p { font-size: 24px; line-height: 30px; font-weight: 400; color: var(--muted); margin-top: 1px; width: 760px; }
.pair .field-label { width: 160px; }
.pair { margin-top: 8px; }
.lon { margin-top: 41px; }
.zoom { margin-top: 40px; }
.view { width: 599px; }
.number { letter-spacing: 0; }
.w173 { width: 173px; }
.w186 { width: 186px; }
.w145 { width: 145px; }
.use-current { width: 775px; height: 48px; font-size: 24px; margin: 40px 0 29px; }
.section-body .switch { margin-top: 8px; }
```
